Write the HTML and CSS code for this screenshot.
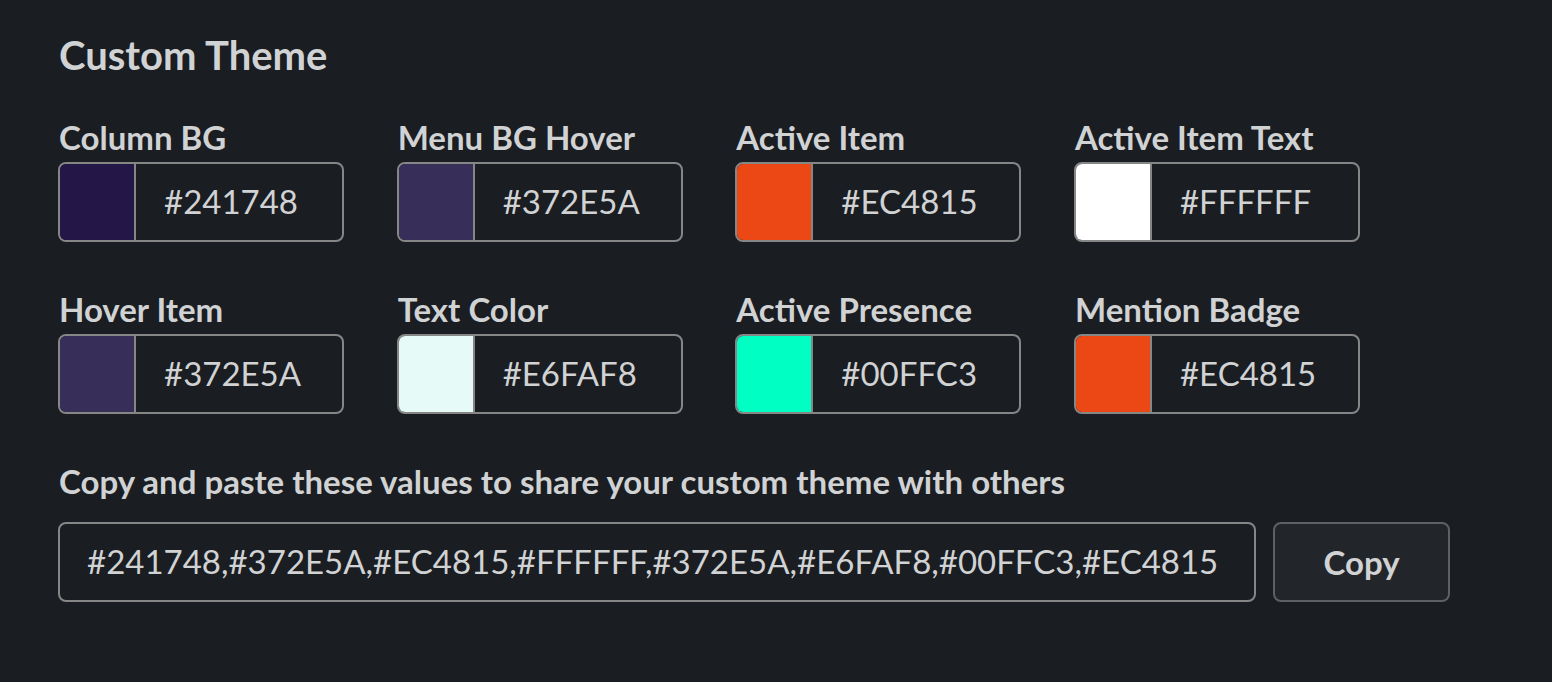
FILE: index.html
```html
<!DOCTYPE html>
<html>
<head>
<meta charset="utf-8">
<link rel="stylesheet" href="styles.css">
</head>
<body>
<div class="panel">
  <h1 class="title">Custom Theme</h1>
  <div class="grid">
    <div class="field">
      <div class="label">Column BG</div>
      <div class="picker"><span class="swatch" style="background:#241748"></span><span class="hex">#241748</span></div>
    </div>
    <div class="field">
      <div class="label">Menu BG Hover</div>
      <div class="picker"><span class="swatch" style="background:#372E5A"></span><span class="hex">#372E5A</span></div>
    </div>
    <div class="field">
      <div class="label">Active Item</div>
      <div class="picker"><span class="swatch" style="background:#EC4815"></span><span class="hex">#EC4815</span></div>
    </div>
    <div class="field">
      <div class="label">Active Item Text</div>
      <div class="picker"><span class="swatch" style="background:#FFFFFF"></span><span class="hex">#FFFFFF</span></div>
    </div>
    <div class="field">
      <div class="label">Hover Item</div>
      <div class="picker"><span class="swatch" style="background:#372E5A"></span><span class="hex">#372E5A</span></div>
    </div>
    <div class="field">
      <div class="label">Text Color</div>
      <div class="picker"><span class="swatch" style="background:#E6FAF8"></span><span class="hex">#E6FAF8</span></div>
    </div>
    <div class="field">
      <div class="label">Active Presence</div>
      <div class="picker"><span class="swatch" style="background:#00FFC3"></span><span class="hex">#00FFC3</span></div>
    </div>
    <div class="field">
      <div class="label">Mention Badge</div>
      <div class="picker"><span class="swatch" style="background:#EC4815"></span><span class="hex">#EC4815</span></div>
    </div>
  </div>
  <div class="label share-label">Copy and paste these values to share your custom theme with others</div>
  <div class="share-row">
    <div class="share-input">#241748,#372E5A,#EC4815,#FFFFFF,#372E5A,#E6FAF8,#00FFC3,#EC4815</div>
    <button class="copy-btn">Copy</button>
  </div>
</div>
</body>
</html>
```
FILE: styles.css
```css
html, body {
  margin: 0;
  padding: 0;
  background: #1a1d21;
}
body {
  font-family: Lato, "Open Sans", sans-serif;
  color: #d1d2d3;
  width: 1552px;
  height: 682px;
  overflow: hidden;
}
.panel {
  padding: 30px 0 0 58px;
}
.title {
  margin: 0 0 37px 1px;
  font-size: 40px;
  font-weight: 700;
  line-height: 50px;
}
.grid {
  display: grid;
  grid-template-columns: repeat(4, 286px);
  column-gap: 52.67px;
  row-gap: 47px;
}
.label {
  font-size: 33px;
  font-weight: 700;
  line-height: 40px;
  margin: 0 0 5px 1px;
  white-space: nowrap;
}
.picker {
  box-sizing: border-box;
  height: 80px;
  width: 286px;
  border: 2px solid #868686;
  border-radius: 8px;
  display: flex;
  overflow: hidden;
}
.swatch {
  width: 74px;
  flex: none;
  border-right: 2px solid #868686;
}
.hex {
  font-size: 33px;
  line-height: 75px;
  padding-left: 28px;
}
.share-label {
  margin-top: 47px;
}
.share-row {
  display: flex;
  gap: 17px;
  margin-top: 21px;
}
.share-input {
  box-sizing: border-box;
  width: 1198px;
  height: 80px;
  border: 2px solid #868686;
  border-radius: 8px;
  font-size: 33px;
  line-height: 75px;
  padding-left: 27px;
  white-space: nowrap;
}
.copy-btn {
  box-sizing: border-box;
  width: 177px;
  height: 80px;
  border: 2px solid #5e6064;
  border-radius: 8px;
  background: #222529;
  color: #d1d2d3;
  font-family: Lato, "Open Sans", sans-serif;
  font-size: 33px;
  font-weight: 700;
  padding: 0;
}
```
